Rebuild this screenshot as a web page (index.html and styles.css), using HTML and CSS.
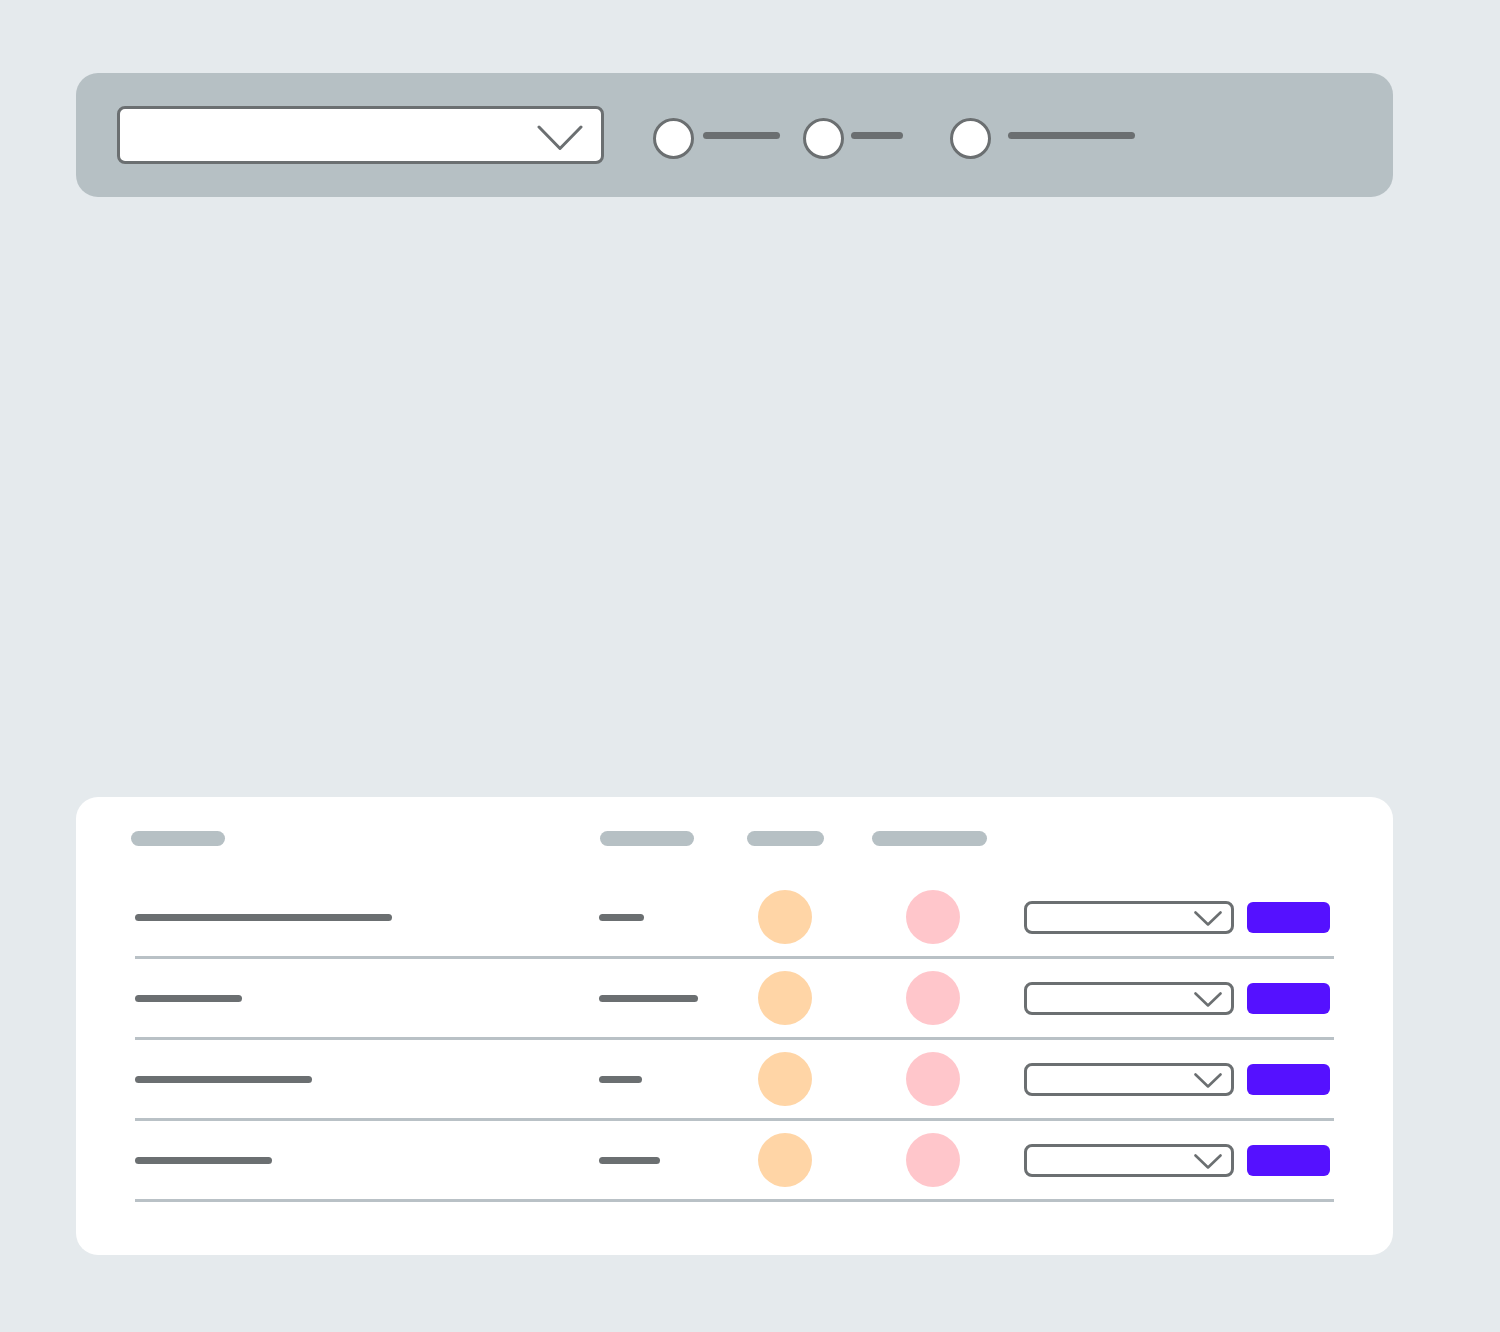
FILE: index.html
```html
<!DOCTYPE html>
<html lang="en">
<head>
<meta charset="utf-8">
<title>Wireframe</title>
<link rel="stylesheet" href="styles.css">
</head>
<body>
<div class="page">
  <div class="toolbar">
    <div class="select-lg">
      <svg class="chev-lg" width="46" height="26" viewBox="0 0 46 26"><polyline points="2,2 23,23.5 44,2" fill="none" stroke="#6b6f71" stroke-width="3" stroke-linecap="round" stroke-linejoin="round"/></svg>
    </div>
    <div class="radio r1"><span class="radio-dot"></span><span class="radio-line g1" style="width:77px"></span></div>
    <div class="radio r2"><span class="radio-dot"></span><span class="radio-line g2" style="width:52px"></span></div>
    <div class="radio r3"><span class="radio-dot"></span><span class="radio-line g3" style="width:127px"></span></div>
  </div>

  <div class="card">
    <div class="thead">
      <span class="th" style="width:94px"></span>
      <span class="th h2" style="width:94px"></span>
      <span class="th h3" style="width:77px"></span>
      <span class="th h4" style="width:115px"></span>
    </div>
    <div class="rows">
      <div class="row">
        <span class="bar" style="width:257px"></span>
        <span class="bar num" style="width:45px"></span>
        <span class="dot orange"></span>
        <span class="dot pink"></span>
        <div class="select-sm"><svg width="28" height="15" viewBox="0 0 28 15"><polyline points="1.5,1.5 14,13.5 26.5,1.5" fill="none" stroke="#6b6f71" stroke-width="2.6" stroke-linecap="round" stroke-linejoin="round"/></svg></div>
        <span class="btn"></span>
      </div>
      <div class="row">
        <span class="bar" style="width:107px"></span>
        <span class="bar" style="width:99px"></span>
        <span class="dot orange"></span>
        <span class="dot pink"></span>
        <div class="select-sm"><svg width="28" height="15" viewBox="0 0 28 15"><polyline points="1.5,1.5 14,13.5 26.5,1.5" fill="none" stroke="#6b6f71" stroke-width="2.6" stroke-linecap="round" stroke-linejoin="round"/></svg></div>
        <span class="btn"></span>
      </div>
      <div class="row">
        <span class="bar" style="width:177px"></span>
        <span class="bar" style="width:43px"></span>
        <span class="dot orange"></span>
        <span class="dot pink"></span>
        <div class="select-sm"><svg width="28" height="15" viewBox="0 0 28 15"><polyline points="1.5,1.5 14,13.5 26.5,1.5" fill="none" stroke="#6b6f71" stroke-width="2.6" stroke-linecap="round" stroke-linejoin="round"/></svg></div>
        <span class="btn"></span>
      </div>
      <div class="row">
        <span class="bar" style="width:137px"></span>
        <span class="bar" style="width:61px"></span>
        <span class="dot orange"></span>
        <span class="dot pink"></span>
        <div class="select-sm"><svg width="28" height="15" viewBox="0 0 28 15"><polyline points="1.5,1.5 14,13.5 26.5,1.5" fill="none" stroke="#6b6f71" stroke-width="2.6" stroke-linecap="round" stroke-linejoin="round"/></svg></div>
        <span class="btn"></span>
      </div>
    </div>
  </div>
</div>
</body>
</html>
```

FILE: styles.css
```css
html, body {
  margin: 0;
  padding: 0;
  background: #e5eaed;
  font-family: "Liberation Sans", Arial, sans-serif;
}

.page {
  width: 1317px;
  padding: 73px 0 0 76px;
}

.toolbar {
  height: 124px;
  box-sizing: border-box;
  padding: 0 41px;
  display: flex;
  align-items: center;
  background: #b6c0c4;
  border-radius: 22px;
}

.select-lg {
  width: 487px;
  height: 58px;
  box-sizing: border-box;
  border: 3px solid #6b6f71;
  border-radius: 8px;
  background: #fff;
  display: flex;
  align-items: center;
  justify-content: flex-end;
  padding-right: 18px;
  flex-shrink: 0;
}

.chev-lg {
  margin-top: 6px;
}

.radio {
  display: flex;
  align-items: center;
  margin-top: 6px;
}

.r1 { margin-left: 49px; }
.r2 { margin-left: 23px; }
.r3 { margin-left: 47px; }

.radio-dot {
  width: 41px;
  height: 41px;
  box-sizing: border-box;
  border: 3px solid #6b6f71;
  border-radius: 50%;
  background: #fff;
  flex-shrink: 0;
}

.radio-line {
  height: 7px;
  border-radius: 4px;
  background: #6b6f71;
  margin-top: -6px;
}

.g1 { margin-left: 9px; }
.g2 { margin-left: 7px; }
.g3 { margin-left: 17px; }

.card {
  margin-top: 600px;
  height: 458px;
  box-sizing: border-box;
  padding: 34px 59px 0 55px;
  background: #fff;
  border-radius: 22px;
}

.thead {
  display: flex;
  height: 15px;
}

.th {
  height: 15px;
  border-radius: 8px;
  background: #b6c0c4;
}

.h2 { margin-left: 375px; }
.h3 { margin-left: 53px; }
.h4 { margin-left: 48px; }

.rows {
  margin-top: 32px;
  margin-left: 4px;
}

.row {
  display: grid;
  grid-template-columns: 464px 159px 148px 118px 223px 83px;
  align-items: center;
  height: 78px;
  border-bottom: 3px solid #b9c1c6;
}

.bar {
  display: block;
  height: 7px;
  border-radius: 4px;
  background: #6b6f71;
}

.dot {
  display: block;
  width: 54px;
  height: 54px;
  border-radius: 50%;
}

.orange { background: #ffd5a6; }
.pink { background: #ffc6cb; }

.select-sm {
  width: 210px;
  height: 33px;
  box-sizing: border-box;
  border: 3px solid #6b6f71;
  border-radius: 8px;
  background: #fff;
  display: flex;
  align-items: center;
  justify-content: flex-end;
  padding-right: 9px;
}

.select-sm svg {
  margin-top: 3px;
}

.btn {
  display: block;
  width: 83px;
  height: 31px;
  border-radius: 6px;
  background: #5511ff;
}
```
